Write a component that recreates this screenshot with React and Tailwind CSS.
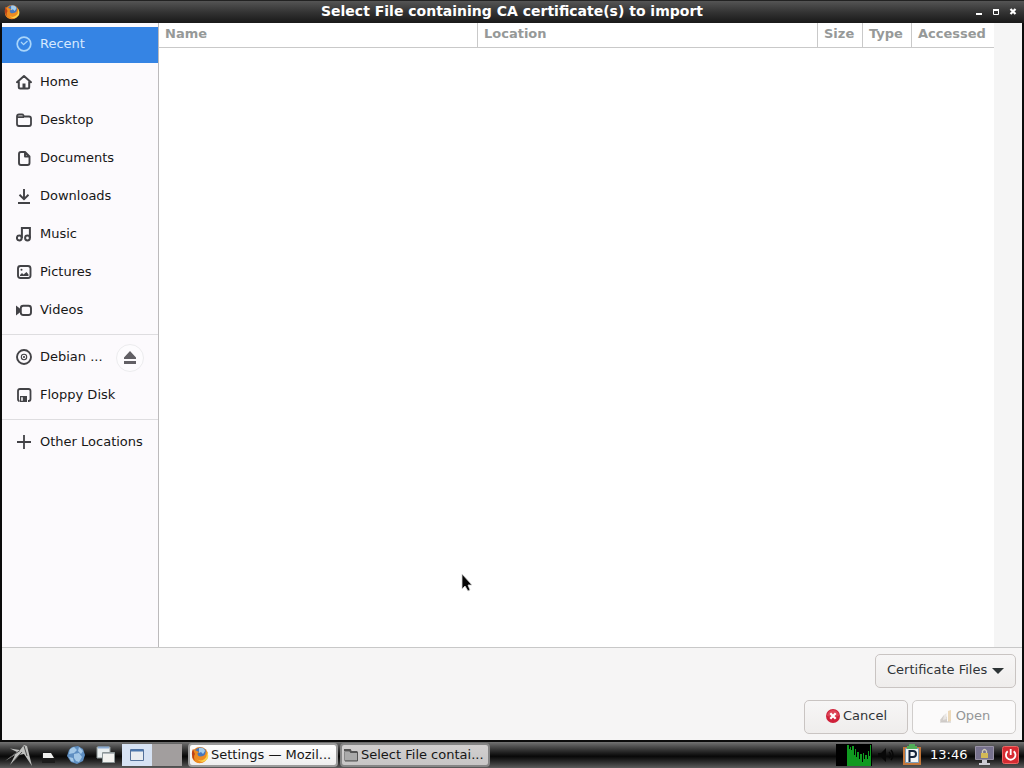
import React from "react";

const line = { fill: "none", stroke: "currentColor", strokeWidth: 2, strokeLinejoin: "round" };

function PlaceIcon({ name }) {
  const shapes = {
    recent: (
      <g {...line}>
        <circle cx="8" cy="8" r="6.8" strokeWidth="1.7" />
        <path d="M5 6 7.6 8.6 11.5 5" strokeWidth="1.3" />
      </g>
    ),
    home: (
      <g>
        <path {...line} strokeLinecap="round" d="M1 8.200 8 2l7 6.200M2.800 7.500V13q0 1.500 1.500 1.500h7.400q1.500 0 1.500-1.500V7.500" />
        <path d="M6.500 14V9.500h3V14z" fill="currentColor" />
      </g>
    ),
    folder: (
      <path {...line} d="M1 12V4.500q0-2 2-2h3q1 0 1.300.8l.7 1.200h5q2 0 2 2V12q0 2-2 2H3q-2 0-2-2zM1.500 5.200h6.500" strokeWidth="1.8" />
    ),
    document: (
      <path {...line} d="M3 13V4q0-2 2-2h4l4.500 4.500V13q0 2-2 2H5q-2 0-2-2zM9 2v4.500h4.500" strokeWidth="1.9" />
    ),
    download: <path {...line} strokeLinejoin="miter" d="M8 1v10M3.500 6.800 8 11.200l4.500-4.400M2 15h12" strokeWidth="1.9" />,
    music: (
      <g {...line}>
        <circle cx="3.300" cy="12" r="2.400" />
        <circle cx="11.500" cy="12" r="2.400" />
        <path d="M5.900 12V2h8v10" strokeLinejoin="miter" />
      </g>
    ),
    picture: (
      <g>
        <rect {...line} x="2" y="2" width="12.500" height="12" rx="2.500" strokeWidth="1.9" />
        <path d="M4 12V11l2-2 1.500 1.500L10.500 8l2 2.500V12z" fill="currentColor" />
        <circle cx="5.500" cy="5.800" r="1" fill="currentColor" />
      </g>
    ),
    video: (
      <g>
        <path d="M0 3.500 4.500 7v3L0 13.500z" fill="currentColor" />
        <rect {...line} x="4.800" y="3.800" width="10.200" height="9.200" rx="2.500" strokeWidth="1.9" />
      </g>
    ),
    disc: (
      <g {...line}>
        <circle cx="8" cy="8" r="7" strokeWidth="1.9" />
        <circle cx="8" cy="8" r="2.700" strokeWidth="1.1" />
        <circle cx="8" cy="8" r="1.100" fill="currentColor" stroke="none" />
      </g>
    ),
    floppy: (
      <g>
        <path {...line} d="M3.500 14Q2 14 2 12V4q0-2 2-2h8.500q2 0 2 2v8q0 2-2 2H12" strokeWidth="1.8" />
        <path d="M4 9h7v6H4zM5.200 10.300v3.500h1.600v-3.500z" fillRule="evenodd" fill="currentColor" />
      </g>
    ),
    plus: <path {...line} d="M8 1v14M1 8h14" strokeWidth="1.8" />,
  };
  return (
    <svg viewBox="0 0 16 16" className="size-4 shrink-0" aria-hidden="true">
      {shapes[name]}
    </svg>
  );
}

function Firefox({ className }) {
  return (
    <svg viewBox="0 0 18 18" className={className} aria-hidden="true">
      <circle cx="9" cy="9" r="8" fill="#e9801c" />
      <circle cx="9.500" cy="7.500" r="6" fill="#4677bd" />
      <path d="M8 2q5-1 6 3l-2 3-2-2-2 1z" fill="#a4cce9" />
      <path d="M2 3q1 2 3 1.500L8 6 6.500 7.500q0 3 3 3 3 0 4.500-2l1-4Q18 8 16 12q-3 6-9 5Q0 15 1 7z" fill="#ed8b21" />
      <path d="M15.500 5q1.500 5-2 8-4 3-8 0 6 6 11 0 2-4-1-8z" fill="#fbd34b" />
      <path d="M2 3Q-1 10 4 15 2 11 4 8L3 6z" fill="#bd4319" />
    </svg>
  );
}

function Place({ icon, children, selected }) {
  return (
    <button
      type="button"
      className={
        selected
          ? "flex h-9 w-full items-center gap-2 bg-[#3584e4] pb-0.5 pl-3.5 text-left text-[#d5e9ff]"
          : "flex h-9 w-full items-center gap-2 pb-0.5 pl-3.5 text-left text-[#171717]"
      }
    >
      <span className={selected ? "flex text-[#a9d5fa]" : "flex text-[#424246]"}>
        <PlaceIcon name={icon} />
      </span>
      <span>{children}</span>
    </button>
  );
}

function Separator() {
  return <hr className="my-[3px] w-full border-0 border-t border-[#dedde0]" />;
}

function TitleBar() {
  return (
    <header className="flex h-[23px] shrink-0 items-center justify-between border-t border-[#222] bg-linear-to-b from-[#555] via-[#343434] via-50% to-[#191919] px-1">
      <div className="flex w-14">
        <Firefox className="size-4" />
      </div>
      <h1 className="pb-0.5 text-[14px] font-bold text-white">Select File containing CA certificate(s) to import</h1>
      <div className="flex w-14 justify-end gap-[5px] pr-px text-white">
        <button type="button" aria-label="Minimize">
          <svg viewBox="0 0 12 12" className="size-3"><path d="M3 8h6" stroke="currentColor" strokeWidth="2" /></svg>
        </button>
        <button type="button" aria-label="Maximize">
          <svg viewBox="0 0 12 12" className="size-3"><path d="M3.500 3v5.500h5V3" fill="none" stroke="currentColor" /><path d="M3 4h6" stroke="currentColor" strokeWidth="2" /></svg>
        </button>
        <button type="button" aria-label="Close">
          <svg viewBox="0 0 12 12" className="size-3"><path d="m3.500 3 5 5m0-5-5 5" stroke="currentColor" strokeWidth="2.200" /></svg>
        </button>
      </div>
    </header>
  );
}

function Sidebar() {
  return (
    <nav aria-label="Places" className="flex w-[157px] shrink-0 flex-col gap-0.5 border-r border-[#bcbabc] bg-[#fcfafd] pt-1">
      <Place icon="recent" selected>Recent</Place>
      <Place icon="home">Home</Place>
      <Place icon="folder">Desktop</Place>
      <Place icon="document">Documents</Place>
      <Place icon="download">Downloads</Place>
      <Place icon="music">Music</Place>
      <Place icon="picture">Pictures</Place>
      <Place icon="video">Videos</Place>
      <Separator />
      <div className="flex items-center pr-3.5">
        <div className="min-w-0 flex-1">
          <Place icon="disc">Debian ...</Place>
        </div>
        <button
          type="button"
          aria-label="Eject"
          className="flex size-7 shrink-0 items-center justify-center rounded-full border border-[#ececee] bg-[#fdfcfe] text-[#626065]"
        >
          <svg viewBox="0 0 14 14" className="size-3.5"><path d="M7 0 13 6.500V8H1V6.500zM1 10h12v3H1z" fill="currentColor" /></svg>
        </button>
      </div>
      <Place icon="floppy">Floppy Disk</Place>
      <Separator />
      <Place icon="plus">Other Locations</Place>
    </nav>
  );
}

function FileList() {
  const cell = "border-r border-b border-[#c9c9c9] pb-0.5 pl-1.5 text-left font-bold";
  return (
    <section aria-label="Files" className="flex min-w-0 flex-1 bg-[#f5f5f5]">
      <div className="min-w-0 flex-1 bg-white">
        <table className="w-full table-fixed border-separate border-spacing-0 text-[#969998]">
          <colgroup>
            <col />
            <col className="w-[340px]" />
            <col className="w-[45px]" />
            <col className="w-[49px]" />
            <col className="w-[82px]" />
          </colgroup>
          <thead>
            <tr className="h-[25px]">
              <th scope="col" className={cell}>Name</th>
              <th scope="col" className={cell}>Location</th>
              <th scope="col" className={cell}>Size</th>
              <th scope="col" className={cell}>Type</th>
              <th scope="col" className="border-b border-[#c9c9c9] pb-0.5 pl-1.5 text-left font-bold">Accessed</th>
            </tr>
          </thead>
        </table>
      </div>
      <div className="w-7 shrink-0" />
    </section>
  );
}

function Actions() {
  return (
    <footer className="flex shrink-0 flex-col items-end gap-3 border-t border-[#c8c8c8] bg-[#f6f5f5] px-1.5 py-1.5 text-[#303437]">
      <div className="relative">
        <select
          aria-label="File type"
          className="h-[34px] w-[141px] appearance-none rounded-[5px] border border-[#c9c4c2] bg-linear-to-b from-[#f7f6f6] to-[#efedec] pb-0.5 pl-[11px]"
        >
          <option>Certificate Files</option>
        </select>
        <svg viewBox="0 0 12 6" className="pointer-events-none absolute top-3.5 right-3 h-1.5 w-3" aria-hidden="true">
          <path d="M0 0h12L6 6z" fill="#2e3436" />
        </svg>
      </div>
      <div className="flex gap-1">
        <button
          type="button"
          className="flex h-[34px] w-[104px] items-center justify-center gap-0.5 rounded-[5px] border border-[#c9c4c2] bg-linear-to-b from-[#f7f6f6] to-[#efedec] pb-0.5"
        >
          <svg viewBox="0 0 16 16" className="size-4" aria-hidden="true">
            <circle cx="8" cy="8" r="7" fill="#cf2039" />
            <path d="M2 8a6 6 0 0 1 12 0q-6 2-12 0z" fill="#dd4658" />
            <path d="m5.300 5.300 5.400 5.400m0-5.400-5.400 5.400" stroke="#fff" strokeWidth="2.300" />
          </svg>
          <span>Cancel</span>
        </button>
        <button
          type="button"
          disabled
          className="flex h-[34px] w-[104px] items-center justify-center gap-0.5 rounded-[5px] border border-[#d0cdcb] bg-[#fbfafa] pb-0.5 text-[#949697]"
        >
          <svg viewBox="0 0 16 16" className="size-4" aria-hidden="true">
            <path d="M2 12 6 7l3 2v5H3z" fill="#d2cecb" />
            <path d="M6 7 8.500 5v6L5 12z" fill="#e9e6e3" />
            <path d="m10 3 3-1v11l-3 1z" fill="#ecd9ba" />
            <path d="M2 14h11" stroke="#cac6c3" />
          </svg>
          <span>Open</span>
        </button>
      </div>
    </footer>
  );
}

function Launchers() {
  return (
    <div className="flex items-center">
      <button type="button" aria-label="Menu" className="flex w-9 justify-center">
        <svg viewBox="0 0 30 24" className="h-6 w-[30px]">
          <path d="M7 5.500 17 7l4-5 3 1 5 20-8-12-5 1-9 10 5-10L2 18 14 9z" fill="#bfc0be" />
          <path d="M17 7.500 6 15m13-6-8 9M21 3l3 10" fill="none" stroke="#4d4d4d" strokeWidth="1" />
        </svg>
      </button>
      <button type="button" aria-label="File manager" className="flex w-6 justify-center">
        <svg viewBox="0 0 18 18" className="size-[18px]">
          <path d="M3 6h9l4 6v5H3z" fill="#1c1c1c" />
          <path d="M4 7h8l3 5H4z" fill="#f1f1ef" />
        </svg>
      </button>
      <button type="button" aria-label="Web browser" className="flex w-8 justify-center">
        <svg viewBox="0 0 20 20" className="size-5">
          <path d="M6 2 12 1l5 3 2 6-2 6-6 3-6-2-4-6 2-6z" fill="#5f8fc2" />
          <path d="m4 4 4-2 3 3-3 3-5 1zM8 9l5-1 3 4-3 5-3-1-2-3zM13 2l4 4-2 3-3-3zM3 12l4 1 1 4-3-1z" fill="#a4c8e7" />
        </svg>
      </button>
      <button type="button" aria-label="Show desktop" className="flex w-7 justify-center">
        <svg viewBox="0 0 20 18" className="h-[18px] w-5">
          <path d="M1 1h13v11H1z" fill="#e9eeef" stroke="#8c9697" />
          <path d="M2 1.500h11" stroke="#8aaad1" strokeWidth="2" />
          <path d="M6.500 6.500h12v10h-12z" fill="#f2f2ef" stroke="#8c9697" />
          <path d="M7 7.500h11" stroke="#b2b8bc" />
        </svg>
      </button>
      <div className="ml-0.5 flex">
        <button type="button" aria-label="Desktop 1" className="flex h-[22px] w-[30px] items-center justify-center bg-[#d6e2f3]">
          <svg viewBox="0 0 14 12" className="h-3 w-3.5"><path d="M.5.5h13v11H.5z" fill="#e9edf1" stroke="#54719a" /><path d="M1 1.500h12" stroke="#4a76ad" strokeWidth="2" /></svg>
        </button>
        <button type="button" aria-label="Desktop 2" className="h-[22px] w-[30px] bg-[#a29e9e]" />
      </div>
    </div>
  );
}

function Tray() {
  return (
    <div className="ml-auto flex items-center pr-1">
      <svg viewBox="0 0 36 22" className="h-[22px] w-9" aria-label="CPU usage">
        <path d="M0 0h36v22H0z" fill="#000" />
        <path d="M11 22V1h2v4h1V3h1v3h1V2h2v9h1V5h1v8h1V8h2v7h1v-5h2v8h1v-9h1v6h1v-4h2v4h1V7h1v5h1V1h1v21z" fill="#109a20" />
      </svg>
      <svg viewBox="0 0 18 16" className="mx-1.5 h-4 w-[18px]" aria-label="Volume">
        <path d="M0 6h3l5-5v14L3 10H0z" fill="#080808" />
        <path d="M11 5q3 3 0 6m2-8q4 5 0 10" fill="none" stroke="#080808" strokeWidth="1.500" />
      </svg>
      <svg viewBox="0 0 20 22" className="h-[22px] w-5" aria-hidden="true">
        <path d="M1 3h18v18H1z" fill="#c4773a" />
        <path d="M3.500 4.500h13v14h-13z" fill="#f2f5f6" stroke="#7d9db9" />
        <path d="M5 5V2h2V0h6v2h2v3z" fill="#51af59" />
        <path d="M7.500 18V7H11q3 0 3 3t-3 3H7.500" fill="none" stroke="#14243c" strokeWidth="2" />
      </svg>
      <time className="ml-2 w-[38px] text-white">13:46</time>
      <button type="button" aria-label="Lock screen" className="ml-1.5">
        <svg viewBox="0 0 22 22" className="h-[22px] w-[22px]">
          <path d="M1.500 2.500h18v13h-18z" fill="#77728e" stroke="#9992a7" />
          <path d="M8 16h5v3h3v2H5v-2h3z" fill="#cccbd3" />
          <path d="M8.500 9V7q2-3 4 0v2" fill="none" stroke="#d1cbb6" strokeWidth="1.300" />
          <path d="M7 9h7v5H7z" fill="#d3b956" />
        </svg>
      </button>
      <button type="button" aria-label="Log out" className="ml-1.5">
        <svg viewBox="0 0 18 18" className="size-[18px]">
          <rect x=".5" y=".5" width="16" height="17" rx="2" fill="#d62b32" stroke="#ed6764" />
          <path d="M5.700 5.200a4.800 4.800 0 1 0 6 0M8.700 3v6" fill="none" stroke="#fff" strokeWidth="1.800" />
        </svg>
      </button>
    </div>
  );
}

function Taskbar() {
  return (
    <nav aria-label="Taskbar" className="flex h-[26px] shrink-0 items-center bg-linear-to-b from-[#737373] via-[#080808] via-55% to-[#5c5c5c]">
      <Launchers />
      <div className="ml-1.5 flex gap-0.5 text-[14px] text-[#171717]">
        <button type="button" className="flex h-6 w-[150px] items-center gap-0.5 rounded-[4px] border-2 border-[#9b9b9b] bg-linear-to-b from-white to-[#eee] px-px text-[13px] whitespace-nowrap">
          <Firefox className="size-[18px] shrink-0" />
          Settings — Mozil...
        </button>
        <button type="button" className="flex h-6 w-[150px] items-center gap-0.5 rounded-[4px] border-2 border-[#858585] bg-linear-to-b from-[#d2d0d0] to-[#c7c5c5] px-px text-[13px] whitespace-nowrap">
          <svg viewBox="0 0 16 16" className="size-4 shrink-0" aria-hidden="true">
            <path d="M1.500 4.500h13v9h-13z" fill="#aaa" stroke="#898989" />
            <path d="M1 3h6l1 2h6" fill="none" stroke="#555" strokeWidth="2" />
            <path d="M14.500 5v9H2" fill="none" stroke="#555" />
          </svg>
          Select File contai...
        </button>
      </div>
      <Tray />
    </nav>
  );
}

export default function App() {
  return (
    <div className="relative flex min-h-screen flex-col bg-[#080808] font-['DejaVu_Sans',sans-serif] text-[13px] leading-5">
      <TitleBar />
      <main className="flex flex-1 flex-col border-x-2 border-b-2 border-[#0b0b0b]">
        <div className="flex flex-1">
          <Sidebar />
          <FileList />
        </div>
        <Actions />
      </main>
      <Taskbar />
      <svg viewBox="0 0 12 19" className="pointer-events-none absolute top-[573px] left-[461px] h-[19px] w-3" aria-hidden="true">
        <path d="M1 1v15l3-3 3 5 2-1-2-5h4z" fill="#050505" stroke="#d5d5d5" strokeWidth=".8" />
      </svg>
    </div>
  );
}
